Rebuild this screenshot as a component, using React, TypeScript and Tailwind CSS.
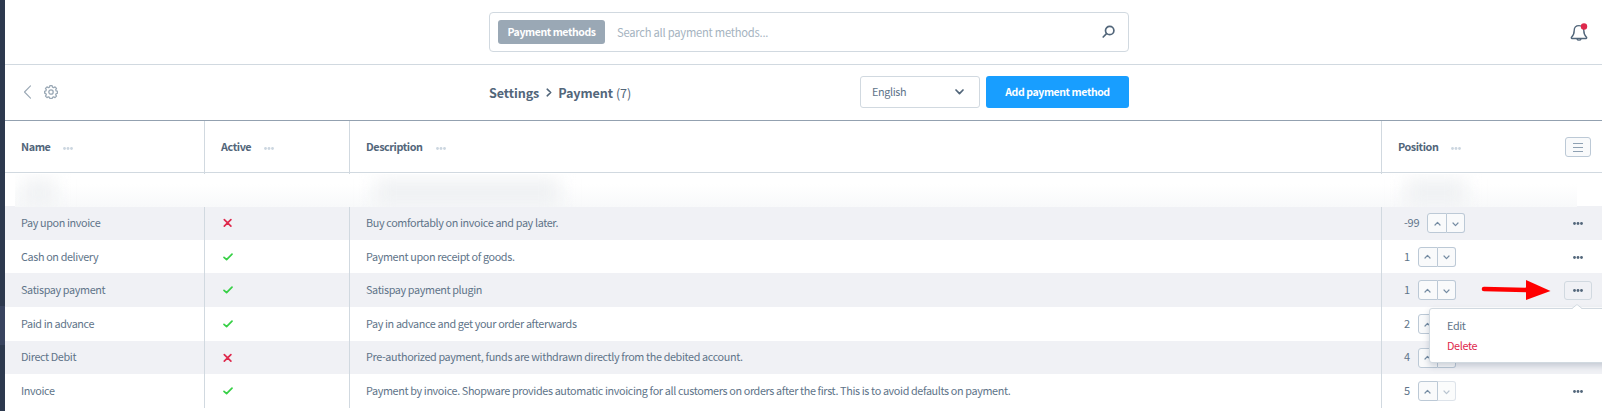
import type { ReactNode } from 'react';

type Method = {
  name: string;
  active: boolean;
  description: string;
  position: string;
  height: string;
  lift: string;
  open?: boolean;
  last?: boolean;
};

const methods: Method[] = [
  { name: 'Pay upon invoice', active: false, description: 'Buy comfortably on invoice and pay later.', position: '-99', height: 'h-[34px]', lift: 'pb-[2px]' },
  { name: 'Cash on delivery', active: true, description: 'Payment upon receipt of goods.', position: '1', height: 'h-[33px]', lift: 'pb-0' },
  { name: 'Satispay payment', active: true, description: 'Satispay payment plugin', position: '1', height: 'h-[34px]', lift: 'pb-[2px]', open: true },
  { name: 'Paid in advance', active: true, description: 'Pay in advance and get your order afterwards', position: '2', height: 'h-[34px]', lift: 'pb-[2px]' },
  { name: 'Direct Debit', active: false, description: 'Pre-authorized payment, funds are withdrawn directly from the debited account.', position: '4', height: 'h-[33px]', lift: 'pb-[2px]' },
  {
    name: 'Invoice',
    active: true,
    description:
      'Payment by invoice. Shopware provides automatic invoicing for all customers on orders after the first. This is to avoid defaults on payment.',
    position: '5',
    height: 'h-[34px]',
    lift: 'pb-[2px]',
    last: true,
  },
];

function Dots({ className }: { className: string }) {
  return (
    <svg viewBox="0 0 10 3" className={`h-[3px] w-[10px] shrink-0 ${className}`} fill="currentColor">
      <circle cx="1.5" cy="1.5" r="1.4" />
      <circle cx="5" cy="1.5" r="1.4" />
      <circle cx="8.5" cy="1.5" r="1.4" />
    </svg>
  );
}

function Check() {
  return (
    <svg viewBox="0 0 10 8" className="h-2 w-[10px]" fill="none" stroke="#37d046" strokeWidth="1.7" strokeLinecap="round" strokeLinejoin="round">
      <path d="M1 4.3 3.6 6.7 9 1.2" />
    </svg>
  );
}

function Cross() {
  return (
    <svg viewBox="0 0 10 10" className="h-[10px] w-[10px]" fill="none" stroke="#de294c" strokeWidth="1.7" strokeLinecap="round">
      <path d="M1.3 1.6 7.9 8.2M7.9 1.6 1.3 8.2" />
    </svg>
  );
}

function Stepper({ last }: { last?: boolean }) {
  return (
    <div className="flex h-5 w-[38px] rounded-[3px] text-[#758ca3]">
      <div className="flex w-5 items-center justify-center rounded-l-[3px] border border-[#bcc9d6] bg-[#f9fafb]">
        <svg viewBox="0 0 7 5" className="h-[5px] w-[7px]" fill="none" stroke="currentColor" strokeWidth="1.2" strokeLinecap="round" strokeLinejoin="round">
          <path d="M1 4 3.5 1.4 6 4" />
        </svg>
      </div>
      <div className={`flex w-[18px] items-center justify-center rounded-r-[3px] border border-l-0 border-[#bcc9d6] bg-[#f9fafb] ${last ? 'opacity-50' : ''}`}>
        <svg viewBox="0 0 7 5" className="mt-[2px] h-[5px] w-[7px]" fill="none" stroke="currentColor" strokeWidth="1.2" strokeLinecap="round" strokeLinejoin="round">
          <path d="M1 1 3.5 3.6 6 1" />
        </svg>
      </div>
    </div>
  );
}

function HeadCell({ children, border = true }: { children: ReactNode; border?: boolean }) {
  return (
    <div className={`flex h-[53px] items-center gap-[13px] pb-px pl-4 text-[10.8px] font-bold tracking-[-0.42px] ${border ? 'border-r border-[#d1d9e0]' : ''}`}>
      <span className={border ? 'pb-px' : ''}>{children}</span>
      <Dots className="mt-[3px] text-[#ccd6e0]" />
    </div>
  );
}

function ContextMenu() {
  return (
    <div className="absolute left-[47px] top-[35px] z-10 h-[55px] w-[190px] rounded-[3px] border border-[#d1d9e0] bg-white pl-[17px] pt-[6px] leading-5 shadow-[0_3px_6px_rgba(40,60,90,0.22)]">
      <svg viewBox="0 0 10 5" className="absolute -top-[5px] left-[142px] h-[5px] w-[10px]">
        <path d="M0 5 5 0 10 5Z" fill="#fff" />
        <path d="M0 4.5 5 .5 10 4.5" fill="none" stroke="#d1d9e0" />
      </svg>
      <div>Edit</div>
      <div className="text-[#de294c]">Delete</div>
    </div>
  );
}

function Row({ method, striped }: { method: Method; striped: boolean }) {
  return (
    <div className={`grid grid-cols-[200px_145px_1032px_220px] ${method.height} ${striped ? 'bg-[#f0f1f5]' : 'bg-white'}`}>
      <div className={`flex items-center border-r border-[#d1d9e0] pl-4 ${method.lift}`}>{method.name}</div>
      <div className="flex items-center border-r border-[#d1d9e0] pl-[18px]">{method.active ? <Check /> : <Cross />}</div>
      <div className={`flex items-center border-r border-[#d1d9e0] pl-4 whitespace-nowrap ${method.lift}`}>{method.description}</div>
      <div className="relative flex items-center pl-[22px]">
        <span className={`mr-2 text-[11px] tracking-[-0.2px] ${method.lift}`}>{method.position}</span>
        <Stepper last={method.last} />
        <div className={`mr-[10px] ml-auto flex h-[19px] w-7 items-center justify-center rounded-[3px] border mt-px ${method.open ? 'border-[#d1d9e0]' : 'border-transparent'}`}>
          <Dots className="text-[#52667a]" />
        </div>
        {method.open && (
          <>
            <svg viewBox="0 0 70 22" className="absolute left-[99px] top-[6px] h-[22px] w-[70px]">
              <path d="M3 10 47 11" stroke="#f00" strokeWidth="4.6" strokeLinecap="round" />
              <path d="M45 1 69.500 12 45 21Z" fill="#f00" />
            </svg>
            <ContextMenu />
          </>
        )}
      </div>
    </div>
  );
}

export default function App() {
  return (
    <div className="flex h-[411px] w-[1602px] overflow-hidden bg-white font-['Noto_Sans_CJK_SC','Noto_Sans',sans-serif] text-[10.8px] tracking-[-0.36px] text-[#607489]">
      <aside className="flex w-[5px] shrink-0 flex-col bg-[#2d394e] pt-[306px]">
        <div className="h-[39px] bg-[#39445f]" />
      </aside>
      <main className="flex w-[1597px] shrink-0 flex-col">
        <header className="flex h-[65px] shrink-0 border-b border-[#d1d9e0] pl-[484px] pt-3">
          <div className="flex h-10 w-[640px] items-center rounded border border-[#d1d9e0] pl-2">
            <div className="flex h-6 w-[107px] items-center justify-center rounded-[3px] bg-[#9aa8b5] text-[10.5px] font-bold tracking-[-0.42px] text-white">
              Payment methods
            </div>
            <span className="ml-3 text-[11.2px] tracking-[-0.24px] text-[#a5b3c0]">Search all payment methods...</span>
            <svg viewBox="0 0 14 14" className="mr-[13px] ml-auto h-[14px] w-[14px]" fill="none" stroke="#52667a" strokeWidth="1.7" strokeLinecap="round">
              <circle cx="8.700" cy="5.500" r="4.200" />
              <path d="M5.500 8.700 2.200 12" />
            </svg>
          </div>
          <svg viewBox="0 0 18 20" className="mt-[10px] ml-auto mr-[14px] h-5 w-[18px]" fill="none" stroke="#52667a" strokeWidth="1.4" strokeLinejoin="round">
            <path d="M9 3.600C5.800 3.600 4.200 5.700 4.200 8.500 4.200 12.500 3.300 13.500 1.500 15.200 1.100 15.800 1.300 16.500 2 16.500H16C16.700 16.500 16.900 15.800 16.500 15.200 14.700 13.500 13.800 12.500 13.800 8.500 13.800 5.700 12.200 3.600 9 3.600Z" />
            <path d="M7 17C7.500 18.500 10.500 18.500 11 17" />
            <circle cx="14" cy="4.500" r="3.200" fill="#de294c" stroke="none" />
          </svg>
        </header>

        <section className="flex h-14 shrink-0 items-center border-b border-[#93a1b0] pb-px">
          <div className="flex w-[484px] items-center gap-3 pl-[18px] text-[#9aa8b5]">
            <svg viewBox="0 0 9 14" className="h-[14px] w-[9px]" fill="none" stroke="currentColor" strokeWidth="1.1" strokeLinecap="round" strokeLinejoin="round">
              <path d="M7.500 .8 1.500 7 7.500 13.200" />
            </svg>
            <svg viewBox="0 0 14 14" className="h-[14px] w-[14px]" fill="none" stroke="currentColor" strokeWidth="1.300" strokeLinejoin="round">
              <path d="M5.900 .7h2.200l.4 1.500 1.100.5 1.400-.8 1.500 1.500-.8 1.400.5 1.100 1.400.4v1.800l-1.400.5-.5 1.100.8 1.400-1.500 1.500-1.400-.8-1.100.5-.4 1.300H5.900l-.4-1.300-1.100-.5-1.400.8-1.500-1.500.8-1.400-.5-1.100L.6 8.100V6.300L1.800 5.900l.5-1.100-.8-1.400L3 1.900l1.400.8 1.100-.5Z" />
              <circle cx="7" cy="7" r="2.200" />
            </svg>
          </div>
          <div className="flex w-[371px] items-center pt-[2px] text-[12.6px] tracking-[-0.1px] text-[#52667a]">
            <span className="font-bold">Settings</span>
            <svg viewBox="0 0 6 9" className="mx-[6.5px] h-[9px] w-[6px]" fill="none" stroke="currentColor" strokeWidth="1.600" strokeLinecap="round" strokeLinejoin="round">
              <path d="M1.200 1.200 4.700 4.500 1.200 7.800" />
            </svg>
            <span className="font-bold">Payment</span>
            <span className="ml-[3px]">(7)</span>
          </div>
          <div className="flex h-8 w-[120px] items-center justify-between rounded-[3px] border border-[#d1d9e0] pr-[15px] pl-[11px]">
            <span className="pb-[2px]">English</span>
            <svg viewBox="0 0 9 6" className="h-[6px] w-[9px]" fill="none" stroke="#52667a" strokeWidth="1.700" strokeLinecap="round" strokeLinejoin="round">
              <path d="M1 1 4.500 4.600 8 1" />
            </svg>
          </div>
          <button className="ml-[6px] h-8 w-[143px] rounded-[3px] bg-[#189eff] text-[10.5px] font-bold tracking-[-0.41px] text-white">Add payment method</button>
        </section>

        <div className="grid h-[52px] shrink-0 grid-cols-[200px_145px_1032px_220px] text-[#52667a] shadow-[inset_0_-1px_0_#d1d9e0]">
          <HeadCell>Name</HeadCell>
          <HeadCell>Active</HeadCell>
          <HeadCell>Description</HeadCell>
          <div className="flex h-[52px] items-center justify-between pr-[11px]">
            <HeadCell border={false}>Position</HeadCell>
            <div className="flex h-5 w-[26px] items-center justify-center rounded-[3px] border border-[#bcc9d6] bg-[#f9fafb]">
              <svg viewBox="0 0 10 9" className="h-[9px] w-[10px]" stroke="#8fa1b3" strokeWidth="1">
                <path d="M0 .5H10M0 4.500H10M0 8.500H10" />
              </svg>
            </div>
          </div>
        </div>
        <div className="z-10 -mb-px h-[34px] shrink-0 pt-px pr-[25px] pl-[10px]">
          <div className="flex h-full items-center overflow-hidden bg-[linear-gradient(#ffffff_30%,#f8f9fa)] pl-2 pt-1">
            <div className="h-7 w-8 bg-[#eff1f3] blur-[9px]" />
            <div className="ml-[320px] h-7 w-[185px] bg-[#eff1f3] blur-[9px]" />
            <div className="ml-[846px] h-7 w-[60px] bg-[#eff1f3] blur-[9px]" />
          </div>
        </div>

        {methods.map((method, i) => (
          <Row key={method.name} method={method} striped={i % 2 === 0} />
        ))}
      </main>
    </div>
  );
}
